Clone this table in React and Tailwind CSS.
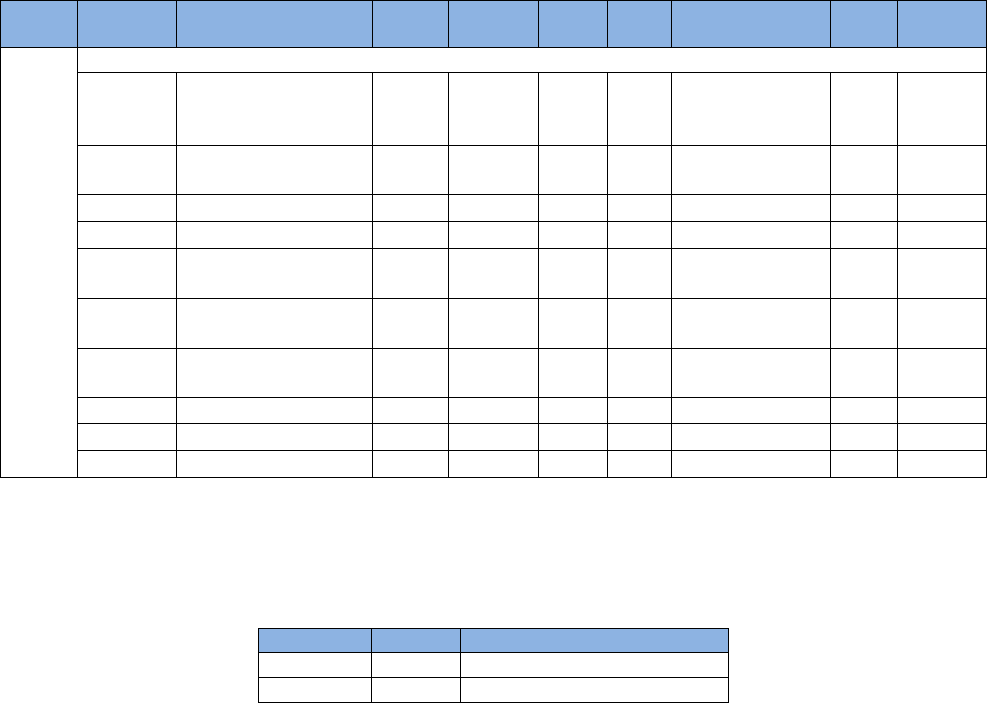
const headCols = 10;
const bodyRows = [72, 48, 26, 26, 49, 49, 48, 25, 26, 26];

const Cell = ({ head = false, className = "" }) => (
  <div className={`${head ? "bg-[#8db3e2]" : "bg-white"} ${className}`} />
);

export default function App() {
  return (
    <div className="w-[987px] h-[703px] bg-white font-['Liberation_Sans',Arial,sans-serif] overflow-hidden">
      {/* main table */}
      <div className="grid w-[987px] gap-px bg-black p-px grid-cols-[76px_98px_195px_75px_89px_68px_63px_158px_66px_88px] grid-rows-[46px_24px_72px_48px_26px_26px_49px_49px_48px_25px_26px_26px]">
        {Array.from({ length: headCols }).map((_, i) => (
          <Cell key={`h${i}`} head />
        ))}
        <Cell className="row-span-11" />
        <Cell className="col-span-9" />
        {bodyRows.map((_, r) =>
          Array.from({ length: 9 }).map((_, c) => <Cell key={`r${r}c${c}`} />)
        )}
      </div>

      {/* small table */}
      <div className="mt-[150px] ml-[258px] w-[471px] grid gap-px bg-black p-px grid-cols-[112px_88px_267px] grid-rows-[23px_24px_24px]">
        <Cell head />
        <Cell head />
        <Cell head />
        <Cell />
        <Cell />
        <Cell />
        <Cell />
        <Cell />
        <Cell />
      </div>
    </div>
  );
}
